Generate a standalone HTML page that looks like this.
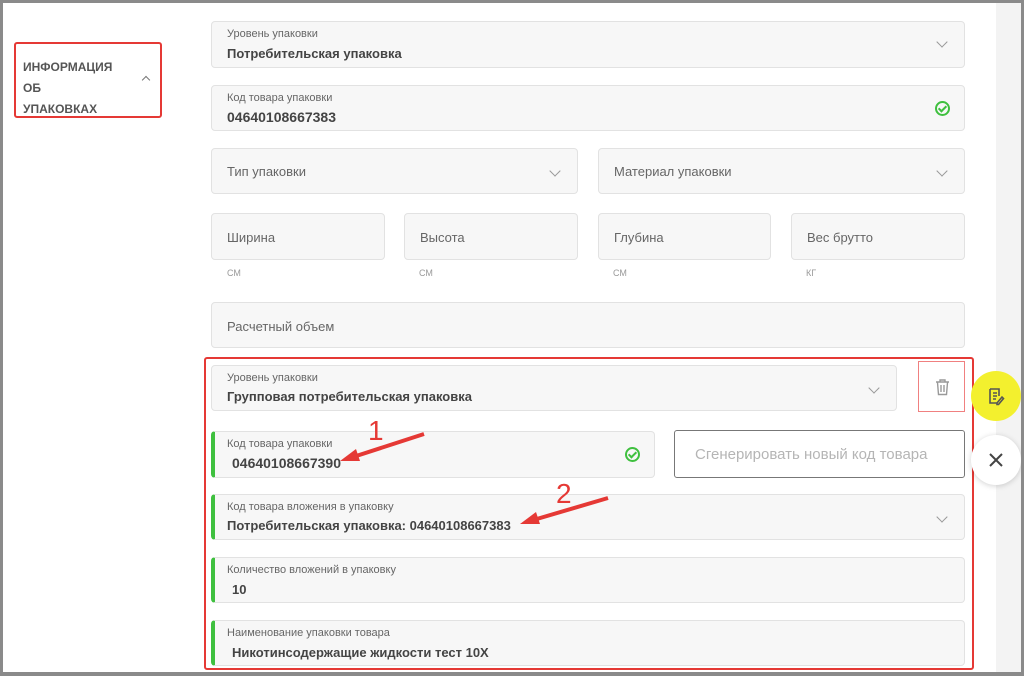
<!DOCTYPE html><html><head><meta charset="utf-8"><style>
*{box-sizing:border-box;margin:0;padding:0}
body{width:1024px;height:676px;overflow:hidden;background:#fff;font-family:"Liberation Sans","DejaVu Sans",sans-serif;position:relative;color:#444}
.frame{position:absolute;left:0;top:0;width:1024px;height:676px;border:3px solid #8a8a8a;border-bottom-width:4px;pointer-events:none;z-index:10}
.strip{position:absolute;left:996px;top:0;width:26px;height:676px;background:#f3f3f3}
.f{position:absolute;background:#f7f7f7;border:1px solid #e2e2e2;border-radius:4px}
.lab{position:absolute;left:15px;top:6px;font-size:11px;color:#666}
.val{position:absolute;left:15px;top:23px;font-size:13px;font-weight:bold;color:#444}
.ph{position:absolute;left:15px;top:15px;font-size:13px;color:#666}
.g{border-left:4px solid #3fc03f}
.chev{position:absolute;right:18px;top:18px;width:8px;height:8px;border-right:1.5px solid #999;border-bottom:1.5px solid #999;transform:rotate(45deg)}
.unit{position:absolute;font-size:9px;color:#999;top:268px}
.ok{position:absolute;right:14px;top:15px;width:15px;height:15px;border:2px solid #3fc03f;border-radius:50%}
.ok:after{content:"";position:absolute;left:3px;top:1px;width:3px;height:6px;border-right:2px solid #3fc03f;border-bottom:2px solid #3fc03f;transform:rotate(45deg)}
</style></head><body>
<div class="strip"></div>
<div style="position:absolute;left:14px;top:42px;width:148px;height:76px;border:2px solid #e53935;border-radius:3px"></div>
<div style="position:absolute;left:23px;top:57px;font-size:12px;font-weight:bold;color:#555;line-height:21px">ИНФОРМАЦИЯ<br>ОБ<br>УПАКОВКАХ</div>
<div style="position:absolute;left:143px;top:77px;width:6px;height:6px;border-left:1.5px solid #777;border-top:1.5px solid #777;transform:rotate(45deg)"></div>

<div class="f" style="left:211px;top:21px;width:754px;height:47px"><div class="lab">Уровень упаковки</div><div class="val" style="top:24px">Потребительская упаковка</div><div class="chev" style="top:16px"></div></div>
<div class="f" style="left:211px;top:85px;width:754px;height:46px"><div class="lab">Код товара упаковки</div><div class="val" style="font-size:14px">04640108667383</div><div class="ok"></div></div>
<div class="f" style="left:211px;top:148px;width:367px;height:46px"><div class="ph">Тип упаковки</div><div class="chev"></div></div>
<div class="f" style="left:598px;top:148px;width:367px;height:46px"><div class="ph">Материал упаковки</div><div class="chev"></div></div>
<div class="f" style="left:211px;top:213px;width:174px;height:47px"><div class="ph" style="top:16px">Ширина</div></div>
<div class="f" style="left:404px;top:213px;width:174px;height:47px"><div class="ph" style="top:16px">Высота</div></div>
<div class="f" style="left:598px;top:213px;width:173px;height:47px"><div class="ph" style="top:16px">Глубина</div></div>
<div class="f" style="left:791px;top:213px;width:174px;height:47px"><div class="ph" style="top:16px">Вес брутто</div></div>
<div class="unit" style="left:227px">СМ</div><div class="unit" style="left:419px">СМ</div><div class="unit" style="left:613px">СМ</div><div class="unit" style="left:806px">КГ</div>
<div class="f" style="left:211px;top:302px;width:754px;height:46px"><div class="ph" style="top:16px">Расчетный объем</div></div>

<div style="position:absolute;left:204px;top:357px;width:770px;height:313px;border:2px solid #e53935;border-radius:3px"></div>
<div class="f" style="left:211px;top:365px;width:686px;height:46px"><div class="lab">Уровень упаковки</div><div class="val">Групповая потребительская упаковка</div><div class="chev"></div></div>
<div style="position:absolute;left:918px;top:361px;width:47px;height:51px;border:1px solid #f08080;background:#fff">
<svg width="47" height="51" viewBox="0 0 47 51"><path d="M17 20h13M21 20v-2h5v2M18.5 20.5l1 12h8l1-12M22 23v7M25 23v7" fill="none" stroke="#999" stroke-width="1.4"/></svg></div>
<div class="f g" style="left:211px;top:431px;width:444px;height:47px"><div class="lab" style="left:12px">Код товара упаковки</div><div class="val" style="left:17px;font-size:14px">04640108667390</div><div class="ok"></div></div>
<div style="position:absolute;left:674px;top:430px;width:291px;height:48px;border:1px solid #777;border-radius:3px;background:#fff;font-size:15px;color:#b5b5b5;padding:15px 0 0 20px">Сгенерировать новый код товара</div>
<div class="f g" style="left:211px;top:494px;width:754px;height:46px"><div class="lab" style="left:12px">Код товара вложения в упаковку</div><div class="val" style="left:12px">Потребительская упаковка: 04640108667383</div><div class="chev"></div></div>
<div class="f g" style="left:211px;top:557px;width:754px;height:46px"><div class="lab" style="left:12px">Количество вложений в упаковку</div><div class="val" style="left:17px;top:24px">10</div></div>
<div class="f g" style="left:211px;top:620px;width:754px;height:46px"><div class="lab" style="left:12px">Наименование упаковки товара</div><div class="val" style="left:17px;top:24px">Никотинсодержащие жидкости тест 10X</div></div>

<div style="position:absolute;left:971px;top:371px;width:50px;height:50px;border-radius:50%;background:#f3f02e"></div>
<svg style="position:absolute;left:986px;top:386px" width="20" height="20" viewBox="0 0 20 20"><path d="M4 3h9v7M4 3v14h7M7 7h4M7 10h4M7 13h3M11 17l5-6 1.5 1.5-5 6H11z" fill="none" stroke="#555" stroke-width="1.6"/></svg>
<div style="position:absolute;left:971px;top:435px;width:50px;height:50px;border-radius:50%;background:#fff;box-shadow:0 1px 6px rgba(0,0,0,.18)"></div>
<svg style="position:absolute;left:988px;top:452px" width="16" height="16" viewBox="0 0 16 16"><path d="M2 2l12 12M14 2L2 14" stroke="#444" stroke-width="2"/></svg>

<svg style="position:absolute;left:0;top:0" width="1024" height="676">
<text x="368" y="440" font-size="28" fill="#e53935" font-family="Liberation Sans">1</text>
<path d="M424 434L350 458" stroke="#e53935" stroke-width="4"/><path d="M340 461l16-12 4 12z" fill="#e53935"/>
<text x="556" y="503" font-size="28" fill="#e53935" font-family="Liberation Sans">2</text>
<path d="M608 498L530 521" stroke="#e53935" stroke-width="4"/><path d="M520 524l16-12 4 12z" fill="#e53935"/>
</svg>
<div class="frame"></div>
</body></html>
